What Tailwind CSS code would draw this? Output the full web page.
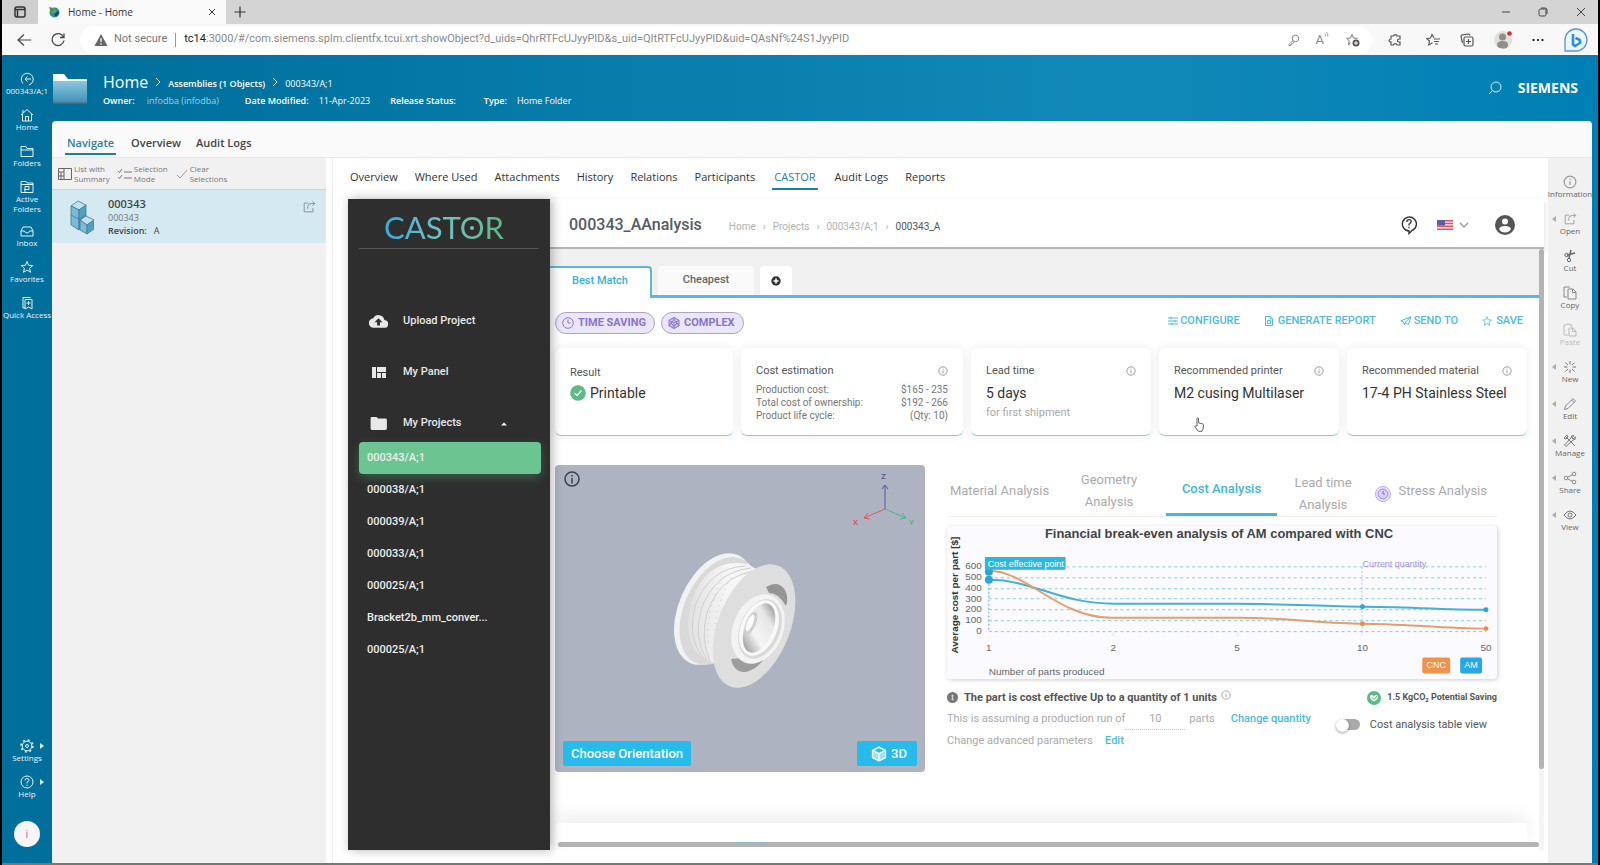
<!DOCTYPE html>
<html lang="en">
<head>
<meta charset="utf-8">
<title>Home - Home</title>
<script src="https://cdn.jsdelivr.net/npm/@tailwindcss/browser@4"></script>
</head>
<body class="flex h-screen flex-col overflow-hidden border-x-2 border-black bg-white font-['Open_Sans','Noto_Sans',sans-serif] text-[#333]">

<svg width="0" height="0" class="absolute" aria-hidden="true">
  <defs>
    <symbol id="info" viewBox="0 0 12 12"><circle cx="6" cy="6" r="5" fill="none" stroke="currentColor"/><path d="M6 5.3v3.2M6 3.2v1.1" stroke="currentColor"/></symbol>
    <symbol id="share-box" viewBox="0 0 16 16"><path d="M7 3.500H2.500v10h10V9" fill="none" stroke="currentColor"/><path d="M6.500 10V8q0-4 4-4h4M12 1.500 14.500 4 12 6.500" fill="none" stroke="currentColor"/></symbol>
    <symbol id="caret-left" viewBox="0 0 4 6"><path d="M4 0v6L0 3z" fill="currentColor"/></symbol>
  </defs>
</svg>

<!-- Browser tab strip -->
<div class="flex h-6 shrink-0 items-stretch bg-[#d4d4d4]">
  <button aria-label="Tab actions" class="flex w-9 items-center justify-center rounded-br bg-[#cfcfcf]">
    <svg class="size-3" viewBox="0 0 12 12"><rect x="1" y="1" width="10" height="10" rx="2" fill="none" stroke="#333" stroke-width="1.500"/><path d="M1 3.500h10M3.500 3v8" stroke="#333" stroke-width="1.500"/></svg>
  </button>
  <div class="flex w-47 items-center gap-2 bg-[#f9f9f9] px-2.5">
    <svg class="size-3" viewBox="0 0 12 12"><circle cx="6.500" cy="6.500" r="5" fill="#2d86a8"/><path d="M1 1l5 1 3 3-2 3-4-1z" fill="#4aa564"/><path d="M2 2l3 1-1 3z" fill="#8b5b3a"/><path d="M6 8l4-3 1 2-3 4z" fill="#174b70"/></svg>
    <span class="grow text-[10px]">Home - Home</span>
    <button aria-label="Close tab"><svg class="size-2" viewBox="0 0 8 8"><path d="M1 1l6 6M7 1 1 7" stroke="#333"/></svg></button>
  </div>
  <button aria-label="New tab" class="px-2"><svg class="size-3" viewBox="0 0 12 12"><path d="M6 .5v11M.5 6h11" stroke="#333" stroke-width="1.200"/></svg></button>
  <div class="ml-auto flex items-center gap-7 pr-3 text-[#444]">
    <button aria-label="Minimize"><svg class="size-2" viewBox="0 0 8 8"><path d="M0 4h8" stroke="currentColor"/></svg></button>
    <button aria-label="Restore"><svg class="size-2.5" viewBox="0 0 10 10"><rect x="1" y="2" width="7" height="7" rx="1.500" fill="none" stroke="currentColor"/><path d="M3 1h4q2 0 2 2v4" fill="none" stroke="currentColor"/></svg></button>
    <button aria-label="Close window"><svg class="size-2.5" viewBox="0 0 10 10"><path d="M1 1l8 8M9 1 1 9" stroke="currentColor"/></svg></button>
  </div>
</div>

<!-- Browser toolbar -->
<div class="flex h-[31px] shrink-0 items-center bg-[#f8f8f8]">
  <button aria-label="Back" class="ml-3.5"><svg class="size-4" viewBox="0 0 16 16"><path d="M15 8H2M8 2.500 2 8l6 5.500" fill="none" stroke="#444" stroke-width="1.200"/></svg></button>
  <button aria-label="Reload" class="ml-[18px]"><svg class="size-4" viewBox="0 0 16 16"><path d="M13.500 5A6 6 0 1 0 14 8.500" fill="none" stroke="#444" stroke-width="1.300"/><path d="M14 1.500V5.500H10" fill="none" stroke="#444" stroke-width="1.300"/></svg></button>
  <div class="ml-3.5 flex h-7 grow items-center rounded-full bg-white pl-3.5 font-[Roboto,sans-serif] text-[11px]">
    <svg class="size-3.5" viewBox="0 0 14 14"><path d="M7 1 13.500 13H.5z" fill="#666"/><path d="M7 5v4M7 10.300v1.400" stroke="#fff" stroke-width="1.200"/></svg>
    <label for="address" class="pl-1.5 text-[#777]">Not secure</label>
    <span class="mx-2 h-3.5 w-px bg-[#999]"></span>
    <span class="text-[#222]">tc14</span>
    <input id="address" class="w-0 grow bg-transparent text-[#8a8a8a] outline-none" value=":3000/#/com.siemens.splm.clientfx.tcui.xrt.showObject?d_uids=QhrRTFcUJyyPID&amp;s_uid=QItRTFcUJyyPID&amp;uid=QAsNf%24S1JyyPID">
    <div class="flex items-center gap-4 pr-3 text-[#888]">
      <button aria-label="Saved passwords"><svg class="size-3" viewBox="0 0 12 12"><circle cx="7.500" cy="4.500" r="3.300" fill="none" stroke="currentColor"/><path d="M5 6.500 1 10.500v1h2v-1.500h1.500L6 8" fill="none" stroke="currentColor"/></svg></button>
      <button aria-label="Read aloud" class="flex text-[13px] leading-4">A<svg class="size-1.5" viewBox="0 0 8 8"><path d="M1 2q2 1 1 4M3 0q3 2 2 6" fill="none" stroke="currentColor"/></svg></button>
      <button aria-label="Add to favorites"><svg class="size-3.5" viewBox="0 0 14 14"><path d="M6 1.500 7.500 5l4 .4M4.500 9.500 2.500 12l.7-4.200L.8 5.400 4.500 5 6 1.500" fill="none" stroke="#777"/><circle cx="10" cy="10" r="3.500" fill="#555"/><path d="M10 8v4M8 10h4" stroke="#fff"/></svg></button>
    </div>
  </div>
  <div class="flex items-center gap-5 pr-2.5 pl-4 text-[#555]">
    <button aria-label="Extensions"><svg class="size-3.5" viewBox="0 0 14 14"><path d="M3 3h2.500a1.800 1.800 0 0 1 3.500 0H12v3q-2.500-.2-2.500 1.500T12 9v3H9q-.3-1.300-1.700-1.300T5.500 12H3V9Q1 8.800 1 7.500T3 6z" fill="none" stroke="currentColor" stroke-width="1.200"/></svg></button>
    <button aria-label="Favorites" class="ml-1"><svg class="size-3.5" viewBox="0 0 14 14"><path d="M8 5 6 1.500 4.500 5 .8 5.400 3.500 8l-.8 4L6.500 9.800M8 6h6M8 8.500h5M9 11h3" fill="none" stroke="currentColor" stroke-width="1.100"/></svg></button>
    <button aria-label="Collections"><svg class="size-3.5" viewBox="0 0 14 14"><rect x="4" y="4" width="9" height="9" rx="1.500" fill="none" stroke="currentColor" stroke-width="1.200"/><path d="M8.500 6v5M6 8.500h5M2.500 10 1 3.500Q1 2 2.500 1.800l6-.8q1 0 1.500 1.500" fill="none" stroke="currentColor" stroke-width="1.200"/></svg></button>
    <button aria-label="Profile"><svg class="size-[18px]" viewBox="0 0 18 18"><circle cx="9" cy="9" r="9" fill="#e2dfdc"/><circle cx="8.500" cy="6" r="3.500" fill="#8f8f8f"/><path d="M3 14q0-4 5.500-4t5.500 4-5.500 3.500T3 14" fill="#8f8f8f"/><circle cx="15.500" cy="2.500" r="2.300" fill="#d22f3d"/></svg></button>
    <button aria-label="More"><svg class="h-1 w-3" viewBox="0 0 12 4"><circle cx="1.500" cy="2" r="1.100"/><circle cx="6" cy="2" r="1.100"/><circle cx="10.500" cy="2" r="1.100"/></svg></button>
    <button aria-label="Bing chat"><svg class="size-6" viewBox="0 0 24 24"><path d="M1 23V12a11 11 0 1 1 11 11z" fill="#eef5fd" stroke="#5f93d6" stroke-width="1.300"/><path d="M9 6v10.500l2 1.500 5-3q1-3-2-4l-2.500-1" fill="none" stroke="#2d8fe6" stroke-width="2.600"/></svg></button>
  </div>
</div>

<!-- Application -->
<div class="flex min-h-0 grow border-b-2 border-[#777] bg-linear-to-r from-[#006f9c] from-5% via-[#1189b8] via-70% to-[#007fb4]">

  <!-- Global navigation -->
  <nav class="flex w-[50px] shrink-0 flex-col bg-[#006f9c] pt-[17px] text-center text-[8px] leading-[10px] text-[#e6f4fa]">
    <a href="#" class="flex h-9 flex-col items-center"><svg class="size-3.5 shrink-0" viewBox="0 0 14 14"><path d="M3 11.500A6 6 0 1 1 9 13M11 7H5M7.500 4.500 5 7l2.500 2.500" fill="none" stroke="currentColor"/></svg>000343/A;1</a>
    <a href="#" class="flex h-9 flex-col items-center"><svg class="size-3.5 shrink-0" viewBox="0 0 14 14"><path d="M1 7 7 1.500 13 7M2.500 6v7h9V6M5.500 13V8.500h3V13M3 5V2" fill="none" stroke="currentColor"/></svg>Home</a>
    <a href="#" class="flex h-9 flex-col items-center"><svg class="size-3.5 shrink-0" viewBox="0 0 14 14"><path d="M1 12.500v-10h5l1 2h6v8zM1 6h12" fill="none" stroke="currentColor"/></svg>Folders</a>
    <a href="#" class="flex h-11 flex-col items-center"><svg class="size-3.5 shrink-0" viewBox="0 0 14 14"><path d="M1 12.500v-11h5l1 1.500h6v9.500zM1 4.500h12" fill="none" stroke="currentColor"/><path d="M5 12V6.500h4v3H4" fill="none" stroke="currentColor"/></svg>Active<br>Folders</a>
    <a href="#" class="flex h-9 flex-col items-center"><svg class="size-3.5 shrink-0" viewBox="0 0 14 14"><path d="M1 7 3 3h8l2 4v5H1zM1 7h3.500q.5 2 2.500 2t2.500-2H13" fill="none" stroke="currentColor"/></svg>Inbox</a>
    <a href="#" class="flex h-9 flex-col items-center"><svg class="size-3.5 shrink-0" viewBox="0 0 14 14"><path d="M7 1.500 8.600 5.300l4.100.3-3.100 2.700 1 4L7 10.100l-3.600 2.200 1-4L1.300 5.600l4.100-.3z" fill="none" stroke="currentColor"/></svg>Favorites</a>
    <a href="#" class="flex h-9 flex-col items-center whitespace-nowrap"><svg class="size-3.5 shrink-0" viewBox="0 0 14 14"><path d="M5 12H3V1.500h7.500M5 3.500h7v9.500L8.500 11 5 13zM8.500 5v4M6.500 7h4" fill="none" stroke="currentColor"/></svg>Quick Access</a>
    <div class="mt-auto flex flex-col pb-4">
      <a href="#" class="relative flex h-9 flex-col items-center"><svg class="size-3.5" viewBox="0 0 14 14"><circle cx="7" cy="7" r="4.800" fill="none" stroke="currentColor"/><circle cx="7" cy="7" r="1.500" fill="none" stroke="currentColor"/><circle cx="7" cy="7" r="6" fill="none" stroke="currentColor" stroke-width="1.500" stroke-dasharray="2 2.700"/></svg>Settings<svg class="absolute top-1 right-2 h-1.5 w-1" viewBox="0 0 4 6"><path d="M0 0v6L4 3z" fill="currentColor"/></svg></a>
      <a href="#" class="relative flex h-9 flex-col items-center"><svg class="size-3.5" viewBox="0 0 14 14"><circle cx="7" cy="7" r="6" fill="none" stroke="currentColor"/><path d="M5 5.500q0-2 2-2t2 1.700Q9 6.300 7 7.200v1.300M7 9.700v1.200" fill="none" stroke="currentColor"/></svg>Help<svg class="absolute top-1 right-2 h-1.5 w-1" viewBox="0 0 4 6"><path d="M0 0v6L4 3z" fill="currentColor"/></svg></a>
      <button class="mx-auto mt-2.5 size-[26px] rounded-full bg-[#f7f5fa] text-[11px] text-[#888]">i</button>
    </div>
  </nav>

  <div class="flex min-w-0 grow flex-col pr-1.5">
    <!-- Page header -->
    <header class="flex h-[66px] shrink-0 items-center text-white">
      <svg class="h-[34px] w-9" viewBox="0 0 36 34"><defs><linearGradient id="folder" x1="0" y1="0" x2="0" y2="1"><stop offset="0" stop-color="#8cc7e0"/><stop offset="1" stop-color="#3f8fb6"/></linearGradient></defs><path d="M1 3h11l4 5h19v5H1z" fill="#fff"/><path d="M1 10h34v22H1z" fill="url(#folder)"/><path d="M1 32h34" stroke="#5d6d78" stroke-width="1.500"/></svg>
      <div class="ml-[15px] pt-1.5">
        <div class="flex items-center gap-[7px] text-[9px]">
          <a href="#" class="text-base leading-5">Home</a><svg class="h-2 w-1.5" viewBox="0 0 6 8"><path d="M1 0l4 4-4 4" fill="none" stroke="#fff"/></svg>
          <a href="#" class="pt-1 font-semibold">Assemblies (1 Objects)</a><svg class="h-2 w-1.5" viewBox="0 0 6 8"><path d="M1 0l4 4-4 4" fill="none" stroke="#fff"/></svg>
          <a href="#" class="pt-1">000343/A;1</a>
        </div>
        <dl class="flex text-[9px] leading-[18px]">
          <dt class="font-semibold">Owner:</dt><dd class="mr-6.5 ml-3 text-[#9fd2ea]">infodba (infodba)</dd>
          <dt class="font-semibold">Date Modified:</dt><dd class="mr-5 ml-2.5">11-Apr-2023</dd>
          <dt class="mr-7 font-semibold">Release Status:</dt>
          <dt class="font-semibold">Type:</dt><dd class="ml-2.5">Home Folder</dd>
        </dl>
      </div>
      <button aria-label="Search" class="mr-4 ml-auto"><svg class="size-3.5" viewBox="0 0 14 14"><circle cx="8" cy="6" r="5" fill="none" stroke="#d5ecf6"/><path d="M4.500 9.500 1 13" stroke="#d5ecf6"/></svg></button>
      <span class="mr-3.5 text-sm font-bold">SIEMENS</span>
    </header>

    <!-- Primary tabs -->
    <nav class="flex h-[37px] shrink-0 items-end gap-[15px] rounded-t-sm border-b border-[#e6e6e6] bg-[#fafafa] px-[13px] text-[11px] leading-4 font-semibold text-[#444]">
      <a href="#" class="mb-0.5 border-b-2 border-[#1b7ea6] px-0.5 pb-0.5 text-[#2a7fa5]">Navigate</a>
      <a href="#" class="mb-1.5">Overview</a>
      <a href="#" class="mb-1.5">Audit Logs</a>
    </nav>

    <div class="flex min-h-0 grow bg-white">
      <!-- Object list -->
      <section class="w-[274px] shrink-0 bg-[#f1f1f1] text-[8px] leading-[10px] text-[#777]">
        <div class="flex h-8 items-center gap-2 border-b border-[#d2d2d2] px-1.5">
          <button class="flex items-center gap-0.5 text-left"><svg class="size-3.5" viewBox="0 0 14 14"><path d="M.5 1.500h13v11H.5zM6 1.500v11M.5 5H6M.5 9H6M3 5v7.500" fill="none" stroke="#666"/></svg><span>List with<br>Summary</span></button>
          <button class="flex items-center gap-0.5 text-left"><svg class="size-3.5" viewBox="0 0 14 14"><path d="M0 4l1.500 1.500L4 2M0 10l1.500 1.500L4 8M6 5h8M6 11h8" fill="none" stroke="#777"/></svg><span>Selection<br>Mode</span></button>
          <button class="flex items-center gap-0.5 text-left"><svg class="size-3" viewBox="0 0 12 12"><path d="M1 7l3 3 7-8" fill="none" stroke="#999"/></svg><span>Clear<br>Selections</span></button>
        </div>
        <article class="flex h-[53px] bg-[#d4e9f1] px-4.5 pt-1.5 text-[#444]">
          <svg class="mt-1 h-9 w-6" viewBox="0 0 24 36"><g stroke="#46788f" stroke-width=".8"><path d="M1 6 8 1l8 4-7 5z" fill="#bfe2f0"/><path d="M1 6l8 4v20l-8-5z" fill="#79bbd8"/><path d="M9 10l7-5v17l-7 8z" fill="#4ea0c6"/><path d="M1 15l8 4 7-4" fill="none"/><path d="M10 20l6-4 8 4-7 5z" fill="#bfe2f0"/><path d="M10 20l7 5v9l-7-4z" fill="#79bbd8"/><path d="M24 20v9l-7 5v-9z" fill="#4ea0c6"/></g></svg>
          <div class="ml-3.5">
            <h2 class="text-[11px] leading-4 font-semibold">000343</h2>
            <p class="text-[9px] leading-[11px] text-[#777]">000343</p>
            <p class="text-[9px] leading-[15px]"><span class="font-semibold">Revision:</span>&nbsp;&nbsp; A</p>
          </div>
          <button aria-label="Open object" class="ml-auto self-start pt-1"><svg class="size-3.5 -mr-2 text-[#888]"><use href="#share-box"/></svg></button>
        </article>
      </section>

      <main class="ml-1.5 flex min-w-0 grow flex-col border-l border-[#eee] pl-[15px]">
        <!-- Secondary tabs -->
        <nav class="flex h-[41px] shrink-0 items-start gap-[17px] pt-2.5 text-[11px] leading-[18px] font-medium text-[#333]">
          <a href="#" class="pl-0.5">Overview</a><a href="#">Where Used</a><a href="#">Attachments</a><a href="#">History</a><a href="#">Relations</a><a href="#">Participants</a>
          <a href="#" class="border-b-2 border-[#1b7ea6] px-0.5 pb-0.5 text-[#2a7fa5]">CASTOR</a>
          <a href="#">Audit Logs</a><a href="#">Reports</a>
        </nav>

        <div class="mb-[13px] flex min-h-0 grow font-[Roboto,sans-serif]">
          <!-- Castor sidebar -->
          <aside class="z-10 w-[202px] shrink-0 bg-[#2e2e2e] px-[11px] text-[11px] font-medium text-[#e8e8e8] shadow-[2px_0_10px_rgba(0,0,0,0.3)]">
            <div class="flex h-[50px] items-center justify-center border-b border-[#555] pt-2 pr-2.5 font-[Lato,sans-serif] text-[31px] font-normal">
              <span class="relative"><span class="bg-linear-to-r from-[#35a9e0] via-[#74c3c0] to-[#5fb586] bg-clip-text text-transparent">CASTOR</span><i class="absolute top-1/2 left-[73%] size-1 -translate-1/2 rounded-full bg-[#74c3a8]"></i></span>
            </div>
            <nav class="pt-[47px]">
              <a href="#" class="flex h-[51px] items-center gap-[15px] pl-2.5"><svg class="h-[13px] w-[19px]" viewBox="0 0 24 16"><path d="M19.400 6A7.500 7.500 0 0 0 5.400 4 6 6 0 0 0 6 16h13a5 5 0 0 0 .4-10z" fill="currentColor"/><path d="M12 4l5 5h-3.200v4h-3.600V9H7z" fill="#2e2e2e"/></svg>Upload Project</a>
              <a href="#" class="flex h-[51px] items-center gap-[15px] pl-2.5"><svg class="h-[11px] w-[19px]" viewBox="0 0 19 11"><path d="M3 0h4v11H3zM8 0h9v5H8zM8 6h4v5H8zM13 6h4v5h-4z" fill="currentColor"/></svg>My Panel</a>
              <a href="#" class="flex h-[51px] items-center gap-[15px] pl-2.5"><svg class="h-[13px] w-[19px]" viewBox="0 0 19 13"><path d="M3 0h4.500L9 1.600h7.500a1.400 1.400 0 0 1 1.400 1.400v8.600a1.400 1.400 0 0 1-1.400 1.400H3a1.400 1.400 0 0 1-1.400-1.400V1.400A1.400 1.400 0 0 1 3 0z" fill="currentColor"/></svg>My Projects<svg class="ml-auto mr-8 h-1 w-1.5" viewBox="0 0 6 4"><path d="M0 3.500h6L3 .5z" fill="#fff"/></svg></a>
              <ul class="-mt-[7px] -mr-0.5 text-[#eee]">
                <li><a href="#" class="flex h-8 items-center rounded-sm bg-[#6cc491] px-2 shadow-[0_4px_10px_rgba(76,175,110,0.35)]">000343/A;1</a></li>
                <li><a href="#" class="flex h-8 items-center px-2">000038/A;1</a></li>
                <li><a href="#" class="flex h-8 items-center px-2">000039/A;1</a></li>
                <li><a href="#" class="flex h-8 items-center px-2">000033/A;1</a></li>
                <li><a href="#" class="flex h-8 items-center px-2">000025/A;1</a></li>
                <li><a href="#" class="flex h-8 items-center px-2">Bracket2b_mm_conver...</a></li>
                <li><a href="#" class="flex h-8 items-center px-2">000025/A;1</a></li>
              </ul>
            </nav>
          </aside>

          <div class="flex min-w-0 grow flex-col">
            <!-- Analysis header -->
            <header class="flex h-[50px] shrink-0 items-center border-b-2 border-[#b5b5b5] pt-1 pl-[19px] text-[10px] text-[#b0b0b0] shadow-[0_3px_6px_rgba(0,0,0,0.15)]">
              <h1 class="mr-[27px] text-base font-medium text-[#555b63]">000343_AAnalysis</h1>
              <nav class="flex gap-[7px] pt-0.5"><a href="#">Home</a><span>›</span><a href="#">Projects</a><span>›</span><a href="#">000343/A;1</a><span>›</span><a href="#" class="text-[#555]">000343_A</a></nav>
              <button aria-label="Help" class="ml-auto"><svg class="h-5 w-4" viewBox="0 0 16 20"><path d="M8 18.500V16A7 7 0 1 1 11 15.500z" fill="none" stroke="#333" stroke-width="1.400"/><path d="M5.800 7q0-2.300 2.200-2.300T10.200 6.500Q10.200 8 8 9.300v1.200M8 11.800v1.500" fill="none" stroke="#333" stroke-width="1.300"/></svg></button>
              <button aria-label="Language" class="ml-5 flex items-center gap-1.5"><svg class="h-2.5 w-4" viewBox="0 0 16 10"><path fill="#f4eaec" d="M0 0h16v10H0z"/><path d="M0 .7h16M0 3.500h16M0 6.300h16M0 9.200h16" stroke="#df5465" stroke-width="1.400"/><path fill="#5960a8" d="M0 0h8v5.500H0z"/></svg><svg class="h-1.5 w-2.5" viewBox="0 0 10 6"><path d="M1 1l4 4 4-4" fill="none" stroke="#999" stroke-width="1.300"/></svg></button>
              <button aria-label="Account" class="mr-[29px] ml-6.5"><svg class="size-5" viewBox="0 0 20 20"><circle cx="10" cy="10" r="10" fill="#555"/><circle cx="10" cy="6.500" r="3" fill="#fff"/><path d="M4 14q1-3 6-3t6 3q-2 3.500-6 3.500T4 14" fill="#fff"/></svg></button>
            </header>

            <div class="flex min-h-0 grow">
              <div class="flex min-w-0 grow flex-col overflow-hidden">
                <!-- Result tabs -->
                <div class="flex h-[49px] shrink-0 bg-[#f0f0f0] pt-[17px] text-[11px] font-medium text-[#666]">
                  <button class="w-[102px] rounded-tr-sm border-t-2 border-r-2 border-[#5cb8d8] bg-white pb-1 text-[#35b0d4]">Best Match</button>
                  <div class="flex grow border-b-[3px] border-[#5cb8d8]">
                    <button class="ml-1.5 w-24 rounded-t bg-[#fafafa]">Cheapest</button>
                    <button aria-label="Add tab" class="ml-1.5 flex w-8 items-center justify-center rounded-t bg-white"><svg class="size-2.5" viewBox="0 0 10 10"><circle cx="5" cy="5" r="4.700" fill="#333"/><path d="M5 2.500v5M2.500 5h5" stroke="#fff" stroke-width="1.600"/></svg></button>
                  </div>
                </div>

                <div class="flex grow flex-col pr-3 pl-[5px]">
                  <div class="flex h-[50px] shrink-0 items-center gap-1.5 text-[11px] font-bold text-[#8a74cc]">
                    <span class="flex h-[22px] items-center gap-1 rounded-full border border-[#aba3c8] bg-[#ebe6fb] pr-2 pl-1.5"><svg class="size-3" viewBox="0 0 12 12"><circle cx="6" cy="6" r="5.300" fill="none" stroke="currentColor"/><path d="M6 2.500V6h2.500" fill="none" stroke="currentColor"/></svg>TIME SAVING</span>
                    <span class="flex h-[22px] items-center gap-1 rounded-full border border-[#aba3c8] bg-[#ebe6fb] pr-2 pl-1.5"><svg class="size-3" viewBox="0 0 12 12"><path d="M6 .5 11 3.200v5.600L6 11.500 1 8.800V3.200zM1 3.200l5 2.800 5-2.800M6 6v5.500M6 .5v2L3 6l3 3 3-3-3-3.500M1 8.800 3 6M11 8.800 9 6" fill="#c7bbec" stroke="currentColor"/></svg>COMPLEX</span>
                    <div class="ml-auto flex gap-6 pr-1 pb-1 font-medium text-[#4bbcdb]">
                      <button class="flex items-center gap-0.5"><svg class="size-2.5" viewBox="0 0 10 10"><path d="M0 2h10M0 5h10M0 8h10M3 .8v2.400M7 3.800v2.400M4 6.800v2.400" stroke="currentColor"/></svg>CONFIGURE</button>
                      <button class="flex items-center gap-1"><svg class="size-2.5" viewBox="0 0 10 10"><path d="M1.500.5h5l2 2v7h-7zM6 .5v2.500h2.500M3.500 7.500v-3h3v3z" fill="none" stroke="currentColor"/></svg>GENERATE REPORT</button>
                      <button class="flex items-center gap-0.5"><svg class="h-2.5 w-3" viewBox="0 0 12 10"><path d="M.8 4.800 11 .8 8.500 8.500 5 6.500 4.500 9 3.300 5.800zM5 6.500 11 .8" fill="none" stroke="currentColor"/></svg>SEND TO</button>
                      <button class="flex items-center gap-1"><svg class="size-2.5" viewBox="0 0 10 10"><path d="M5 .7 6.200 3.800l3.300.2-2.500 2.100.8 3.200L5 7.500 2.200 9.300 3 6.100.5 4l3.300-.2z" fill="none" stroke="currentColor" stroke-width=".8"/></svg>SAVE</button>
                    </div>
                  </div>

                  <!-- Summary cards -->
                  <div class="relative grid h-[88px] shrink-0 grid-cols-[178fr_222fr_180fr_180fr_180fr] gap-2 *:rounded-md *:border-b *:border-[#8ccadd] *:bg-white *:px-[15px] *:pt-[15px] *:shadow-[0_0_10px_rgba(0,0,0,0.08)]">
                    <section>
                      <h3 class="mt-0.5 text-[11px] leading-4 text-[#555]">Result</h3>
                      <p class="mt-0.5 flex items-center gap-1 text-sm leading-5"><svg class="size-4" viewBox="0 0 16 16"><circle cx="8" cy="8" r="7.800" fill="#5dba85"/><path d="M4.500 8.300 7 10.500l4.500-5" fill="none" stroke="#fff" stroke-width="1.500"/></svg>Printable</p>
                    </section>
                    <section>
                      <h3 class="flex items-center justify-between text-[11px] leading-4 text-[#555]">Cost estimation<svg class="size-2.5 text-[#888]"><use href="#info"/></svg></h3>
                      <dl class="mt-1 grid grid-cols-[1fr_auto] text-[10px] leading-[13px] text-[#777]">
                        <dt>Production cost:</dt><dd class="text-right">$165 - 235</dd>
                        <dt>Total cost of ownership:</dt><dd class="text-right">$192 - 266</dd>
                        <dt>Product life cycle:</dt><dd class="text-right">(Qty: 10)</dd>
                      </dl>
                    </section>
                    <section>
                      <h3 class="flex items-center justify-between text-[11px] leading-4 text-[#555]">Lead time<svg class="size-2.5 text-[#888]"><use href="#info"/></svg></h3>
                      <p class="mt-1 text-sm leading-5">5 days</p>
                      <p class="text-[11px] leading-5 text-[#aaa]">for first shipment</p>
                    </section>
                    <section>
                      <h3 class="flex items-center justify-between text-[11px] leading-4 text-[#555]">Recommended printer<svg class="size-2.5 text-[#888]"><use href="#info"/></svg></h3>
                      <p class="mt-1 text-sm leading-5 whitespace-nowrap">M2 cusing Multilaser</p>
                      <svg class="mt-3.5 ml-5 h-[15px] w-2.5" viewBox="0 0 10 15"><path d="M3 9V1.800q0-1 .8-1t.8 1V6l4 .8q1 .3.900 1.500L9 12l-1 2.300H4.300L1 10q-.5-1 .5-1.200z" fill="#fff" stroke="#666"/></svg>
                    </section>
                    <section>
                      <h3 class="flex items-center justify-between text-[11px] leading-4 text-[#555]">Recommended material<svg class="size-2.5 text-[#888]"><use href="#info"/></svg></h3>
                      <p class="mt-1 text-sm leading-5 whitespace-nowrap">17-4 PH Stainless Steel</p>
                    </section>
                  </div>

                  <div class="mt-[29px] flex gap-[22px]">
                    <!-- Model viewer -->
                    <section class="flex h-[307px] w-[370px] shrink-0 flex-col rounded bg-[#adb3c1] px-2 pt-1 pb-1.5 text-[13px] font-medium text-white">
                      <div class="min-h-0 grow">
                        <svg class="size-full" viewBox="0 0 354 272" preserveAspectRatio="xMidYMin">
                          <defs>
                            <linearGradient id="drum" x1="0" y1="0" x2="1" y2="0"><stop offset="0" stop-color="#e0e0e0"/><stop offset=".5" stop-color="#f7f7f7"/><stop offset="1" stop-color="#ececec"/></linearGradient>
                            <linearGradient id="bore" x1=".7" y1="0" x2=".3" y2="1"><stop offset="0" stop-color="#9a9a9a"/><stop offset=".25" stop-color="#e6e6e6"/><stop offset=".65" stop-color="#f5f5f5"/><stop offset="1" stop-color="#9c9c9c"/></linearGradient>
                          </defs>
                          <circle cx="9" cy="10" r="7" fill="none" stroke="#3d4049" stroke-width="1.500"/><path d="M9 9v5.500M9 6v1.600" stroke="#3d4049" stroke-width="1.500"/>
                          <g transform="translate(-8 -4)">
                            <path d="M330 44V21M327 24l3-4 3 4" fill="none" stroke="#54569c"/><path d="M330 44l-21 9M313 48l-4 5 6 1" fill="none" stroke="#e0555a"/><path d="M330 44l21 9M347 48l4 5-6 1" fill="none" stroke="#4cb184"/>
                            <g font-family="Roboto" font-size="8" font-weight="500"><text x="326" y="14" fill="#54569c">Z</text><text x="298" y="60" fill="#e0555a">X</text><text x="354" y="60" fill="#4cb184">Y</text></g>
                            <ellipse cx="159" cy="144" rx="35" ry="59" transform="rotate(24 159 144)" fill="#f2f2f2"/>
                            <ellipse cx="164" cy="146" rx="35" ry="57" transform="rotate(24 164 146)" fill="#d9d9d9"/>
                            <path d="M193 99Q152 92 137 135q-12 42 12 58l35 18L220 116z" fill="url(#drum)"/>
                            <g fill="none" stroke="#cfcfcf"><path d="M190 101q-36 2-50 40-8 34 9 52M196 103q-37 4-50 42-8 28 6 50M202 106q-36 3-50 42-7 26 3 48"/><path d="M165 118q-14 28-12 62M176 113q-18 30-16 66" stroke-dasharray="1 5" stroke="#c4c4c4"/></g>
                            <ellipse cx="199" cy="161" rx="36" ry="65" transform="rotate(22 199 161)" fill="#dedede"/>
                            <path d="M211 122q12-7 19 3 4 8 1 16-7-13-17-13z" fill="#959595"/><path d="M176 194q3 14 15 13 10-2 19-14-17 4-23 0z" fill="#9c9c9c"/>
                            <ellipse cx="203" cy="164" rx="25" ry="36" transform="rotate(22 203 164)" fill="#f3f3f3"/>
                            <ellipse cx="205" cy="164" rx="20" ry="31" transform="rotate(22 205 164)" fill="#d8d8d8"/>
                            <ellipse cx="204" cy="163" rx="18" ry="29" transform="rotate(22 204 163)" fill="#f8f8f8"/>
                            <ellipse cx="204" cy="163" rx="14" ry="26" transform="rotate(22 204 163)" fill="url(#bore)"/>
                            <ellipse cx="196" cy="158" rx="5" ry="12" transform="rotate(22 196 158)" fill="#cfcfcf"/><ellipse cx="195" cy="158" rx="3" ry="9" transform="rotate(22 195 158)" fill="#fafafa"/>
                          </g>
                        </svg>
                      </div>
                      <div class="flex shrink-0 justify-between">
                        <button class="h-[25px] rounded-xs bg-[#26bbea] px-2">Choose Orientation</button>
                        <button class="flex h-[25px] items-center gap-1 rounded-xs bg-[#26bbea] pr-2.5 pl-3.5"><svg class="size-4" viewBox="0 0 16 16"><path d="M8 1l6.500 3.500v7L8 15l-6.500-3.500v-7z" fill="#9ee0f6" stroke="#fff" stroke-width="1.300"/><path d="M1.500 4.500 8 8l6.500-3.500M8 8v7" fill="none" stroke="#fff" stroke-width="1.300"/><path d="M4 4.500 8 2.500l4 2-4 2z" fill="#26bbea"/></svg>3D</button>
                      </div>
                    </section>

                    <!-- Analysis -->
                    <section class="min-w-0 grow pr-[30px] text-[13px]">
                      <div class="flex h-[52px] items-stretch border-b border-[#f0f0f0] text-center leading-[22px] text-[#aaa]">
                        <button class="w-[105px] shrink-0 whitespace-nowrap">Material Analysis</button>
                        <button class="w-[114px] shrink-0 px-6">Geometry Analysis</button>
                        <button class="w-[111px] shrink-0 border-b-[3px] border-[#45b6d6] font-medium text-[#3fb7d9]">Cost Analysis</button>
                        <button class="w-[92px] shrink-0 px-3 pt-1.5">Lead time Analysis</button>
                        <button class="flex grow items-center justify-end gap-2 pr-2.5 whitespace-nowrap"><svg class="mt-1.5 size-4 shrink-0" viewBox="0 0 16 16"><circle cx="8" cy="8" r="7.500" fill="#eee9fb" stroke="#b8a9ea"/><circle cx="8" cy="8" r="5" fill="#d9cff6" stroke="#9d88df"/><path d="M8 5v3h2" fill="none" stroke="#7d66c8"/></svg>Stress Analysis</button>
                      </div>
                      <svg class="mt-[9px] block w-full rounded bg-[#fafaff] shadow-[1px_1px_4px_rgba(0,0,0,0.2)]" viewBox="0 0 552 154" font-family="Liberation Sans, sans-serif" font-size="9" fill="#666">
                        <text x="273" y="12" text-anchor="middle" font-size="13" font-weight="bold" fill="#444">Financial break-even analysis of AM compared with CNC</text>
                        <text transform="translate(11 128) rotate(-90)" font-size="10" font-weight="bold" fill="#333">Average cost per part [$]</text>
                        <g text-anchor="end" font-size="10"><text x="35" y="43">600</text><text x="35" y="54">500</text><text x="35" y="65">400</text><text x="35" y="76">300</text><text x="35" y="86">200</text><text x="35" y="97">100</text><text x="35" y="108">0</text></g>
                        <path d="M42 41H541M42 52H541M42 63H541M42 73H541M42 84H541M42 95H541M42 106H541" stroke="#86ccd6" stroke-dasharray="3 3" fill="none"/>
                        <path d="M42 54V106" stroke="#45b6d6" stroke-dasharray="2 2"/><path d="M416.500 41V110" stroke="#c3b6e8" stroke-dasharray="2 2"/><path d="M167 107v4M292 107v4" stroke="#e5e5ee"/>
                        <path d="M42 54C87 54 112 78 168 78H292C340 78 380 81 417 81S500 84 541 84" fill="none" stroke="#45b0d4" stroke-width="2"/>
                        <path d="M42 45C80 45 112 92 164 92H292C340 92 380 98 417 98S500 103 541 103" fill="none" stroke="#e3a06f" stroke-width="2"/>
                        <g fill="#2ba6d0"><circle cx="42" cy="46" r="4"/><circle cx="42" cy="54" r="4"/><circle cx="417" cy="81" r="2.500"/><circle cx="541" cy="84" r="2.500"/></g><g fill="#e0904f"><circle cx="417" cy="98" r="2.500"/><circle cx="541" cy="103" r="2.500"/></g>
                        <rect x="38" y="31" width="81" height="13" rx="1" fill="#2bb8dc"/><text x="41" y="41" fill="#fff">Cost effective point</text>
                        <text x="417" y="41" fill="#a493da">Current quantity</text>
                        <g text-anchor="middle" font-size="10"><text x="42" y="125">1</text><text x="167" y="125">2</text><text x="291" y="125">5</text><text x="417" y="125">10</text><text x="541" y="125">50</text></g>
                        <text x="42" y="150" font-size="10">Number of parts produced</text>
                        <rect x="477" y="132" width="28" height="16" rx="2" fill="#f0924c"/><text x="491" y="143" text-anchor="middle" fill="#fff">CNC</text>
                        <rect x="515" y="132" width="22" height="16" rx="2" fill="#26a8e6"/><text x="526" y="143" text-anchor="middle" fill="#fff">AM</text>
                      </svg>
                      <div class="mt-2 flex justify-between text-[11px] leading-[21px] text-[#aaa]">
                        <div>
                          <p class="flex items-center gap-1.5 font-bold text-[#555]"><svg class="size-[11px]" viewBox="0 0 12 12"><circle cx="6" cy="6" r="6" fill="#777"/><path d="M6 3v6M4.500 4.500q2-1.500 3 0M4.500 7.500q2 1.500 3 0" fill="none" stroke="#ddd"/></svg>The part is cost effective Up to a quantity of 1 units<svg class="-ml-0.5 mb-1.5 size-2.5 text-[#999]"><use href="#info"/></svg></p>
                          <p class="flex"><label for="run">This is assuming a production run of</label><input id="run" value="10" class="mr-1 w-[60px] border-b border-dotted border-[#ccc] text-center outline-none"><span>parts</span><a href="#" class="ml-4 font-medium text-[#4bbcdb]">Change quantity</a></p>
                          <p>Change advanced parameters<a href="#" class="ml-3 font-medium text-[#4bbcdb]">Edit</a></p>
                        </div>
                        <div class="text-[#555]">
                          <p class="flex items-center justify-end gap-1.5 text-[9px] font-bold"><svg class="size-3.5" viewBox="0 0 14 14"><circle cx="7" cy="7" r="7" fill="#5dba85"/><path d="M3 5q2-2 4 .5Q9 3 11 5q0 4-4 5.500Q3 9 3 5" fill="#fff"/><path d="M5 6.500l2 2 3-3.500" fill="none" stroke="#5dba85"/></svg>1.5 KgCO₂ Potential Saving</p>
                          <label class="mt-1.5 flex items-center gap-2.5 pr-2.5"><input type="checkbox" class="h-[11px] w-6 appearance-none rounded-full bg-linear-to-r from-transparent from-30% to-[#aaa] to-30% before:block before:size-[13px] before:rounded-full before:bg-white before:shadow-[0_1px_3px_rgba(0,0,0,0.4)]">Cost analysis table view</label>
                        </div>
                      </div>
                    </section>
                  </div>

                  <div class="mt-auto h-[19px] rounded-t-sm bg-white shadow-[0_-6px_20px_rgba(0,0,0,0.08)]"></div>
                </div>
                <div class="ml-2 flex h-[5px] shrink-0 items-start rounded-full bg-[#b3b3b3] pl-[177px]"><span class="h-0.5 w-[30px] bg-[#8cc0c6]"></span></div>
                <div class="h-[3px] shrink-0"></div>
              </div>
              <div class="w-[5px] shrink-0 bg-[#f4f4f4]"><div class="h-[520px] rounded-full bg-[#b3b3b3]"></div></div>
            </div>
          </div>
        </div>
      </main>

      <!-- Command bar -->
      <aside class="ml-1 flex w-11 shrink-0 flex-col bg-[#f1f1f1] pt-[17px] text-[8px] leading-[10px] text-[#666] *:relative *:flex *:h-[37px] *:flex-col *:items-center">
        <button><svg class="size-3.5 text-[#999]"><use href="#info"/></svg>Information</button>
        <button><svg class="absolute top-1 left-1 h-1.5 w-1 text-[#aaa]"><use href="#caret-left"/></svg><svg class="size-3.5 text-[#999]"><use href="#share-box"/></svg>Open</button>
        <button><svg class="size-3.5" viewBox="0 0 14 14"><path d="M8 1 6 9M12 4 4 6" stroke="#666" stroke-width="1.500"/><circle cx="3.500" cy="6" r="1.700" fill="none" stroke="#666"/><circle cx="6" cy="11" r="1.700" fill="none" stroke="#666"/></svg>Cut</button>
        <button><svg class="size-3.5" viewBox="0 0 14 14"><path d="M4 11H1V1h6M5 3h5l3 3v7H5zM9.500 3v3.500H13" fill="none" stroke="#888"/></svg>Copy</button>
        <button class="text-[#bbb]"><svg class="size-3.5" viewBox="0 0 14 14"><path d="M5 12H1V2h2l1-1h2l1 1h2v2M6 5h4l3 3v5H6zM9.500 5v3.500H13" fill="none" stroke="currentColor"/></svg>Paste</button>
        <button><svg class="absolute top-1 left-1 h-1.5 w-1 text-[#aaa]"><use href="#caret-left"/></svg><svg class="size-3.5" viewBox="0 0 14 14"><path d="M7 1v3.500M7 9.500V13M1 7h3.500M9.500 7H13M2.500 2.500 5 5M9 9l2.500 2.500M11.500 2.500 9 5M5 9l-2.500 2.500" stroke="#777"/></svg>New</button>
        <button><svg class="absolute top-1 left-1 h-1.5 w-1 text-[#aaa]"><use href="#caret-left"/></svg><svg class="size-3.5" viewBox="0 0 14 14"><path d="M1.500 12.500 2.500 9 10 1.500l2.500 2.500L5 11.500zM8.500 3 11 5.500" fill="none" stroke="#888"/></svg>Edit</button>
        <button><svg class="absolute top-1 left-1 h-1.5 w-1 text-[#aaa]"><use href="#caret-left"/></svg><svg class="size-3.5" viewBox="0 0 14 14"><path d="M2 2l10 10M4 1 1 4l2 1 2-2zM12.500 3 10 5 9 4l2-2.500Q8 1 8 4L1.500 11 3 12.500 10 6q3 0 2.500-3" fill="none" stroke="#777"/></svg>Manage</button>
        <button><svg class="absolute top-1 left-1 h-1.5 w-1 text-[#aaa]"><use href="#caret-left"/></svg><svg class="size-3.5" viewBox="0 0 14 14"><g fill="none" stroke="#888"><circle cx="3" cy="7" r="1.800"/><circle cx="11" cy="3" r="1.800"/><circle cx="11" cy="11" r="1.800"/><path d="M4.600 6.200 9.400 3.800M4.600 7.800l4.800 2.400"/></g></svg>Share</button>
        <button><svg class="absolute top-1 left-1 h-1.5 w-1 text-[#aaa]"><use href="#caret-left"/></svg><svg class="size-3.5" viewBox="0 0 14 14"><path d="M1 7q6-8 12 0-6 8-12 0z" fill="none" stroke="#777"/><circle cx="7" cy="7" r="2" fill="none" stroke="#777"/></svg>View</button>
      </aside>
    </div>
  </div>
</div>
</body>
</html>
